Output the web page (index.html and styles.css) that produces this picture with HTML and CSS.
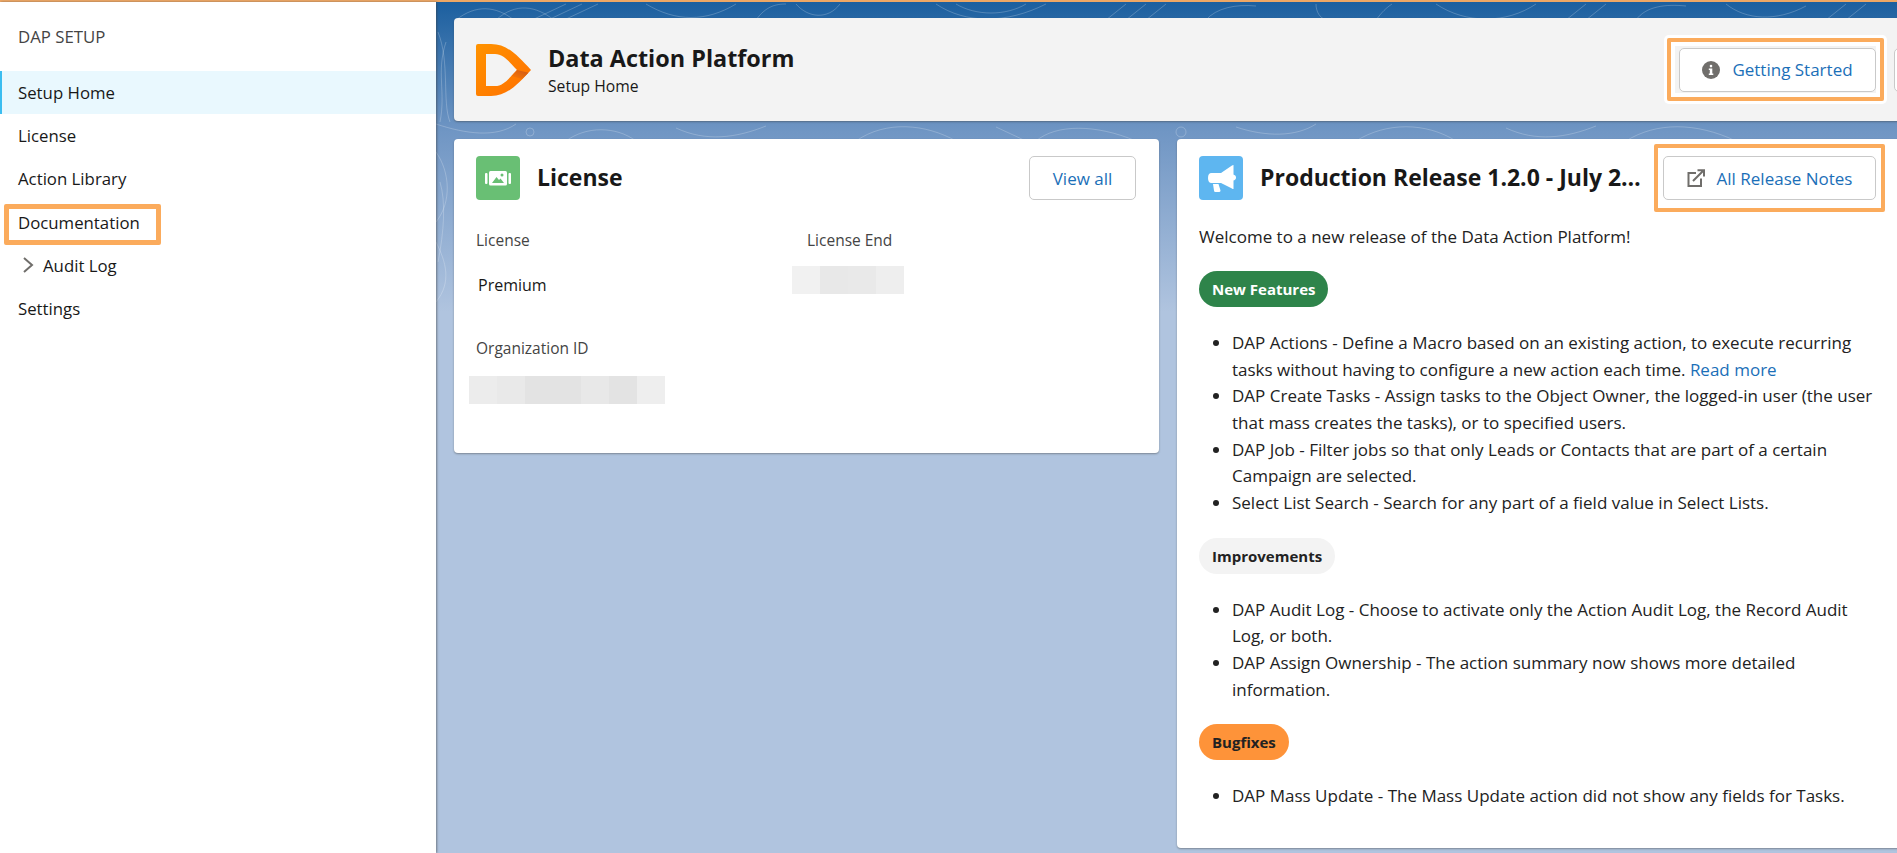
FILE: index.html
```html
<!DOCTYPE html>
<html lang="en">
<head>
    <meta charset="UTF-8">
    <meta name="viewport" content="width=device-width, initial-scale=1.0">
    <title>DAP Setup - Setup Home</title>
    <link rel="stylesheet" href="styles.css">
</head>
<body>
    <div class="top-line"></div>
    <div class="shell">
        <nav class="sidebar">
            <div class="sidebar-title">DAP SETUP</div>
            <a class="nav-item active">Setup Home</a>
            <a class="nav-item">License</a>
            <a class="nav-item">Action Library</a>
            <a class="nav-item">Documentation<span class="mark mark-doc"></span></a>
            <a class="nav-item nav-branch">
                <svg class="chevron" viewBox="0 0 12 18"><path d="M2 2l8 7-8 7" fill="none" stroke="#706e6b" stroke-width="2"/></svg>
                Audit Log
            </a>
            <a class="nav-item">Settings</a>
        </nav>

        <main class="main">
            <svg class="contours" viewBox="0 0 1461 330" preserveAspectRatio="none">
                <g fill="none" stroke="#fff" stroke-opacity="0.22" stroke-width="1">
                    <path d="M20 18C40 2 60 4 78 18M60 18C80 0 100 4 118 18M96 18L130 2M112 18L146 2M128 18L162 2"/>
                    <path d="M210 2C240 20 270 20 300 2M320 18C330 4 340 2 350 2M360 2C372 16 392 18 404 2"/>
                    <path d="M500 2C530 22 570 22 610 2M520 2C540 14 570 14 590 2M670 18L690 2M690 18L710 2M710 18L730 2M770 18C780 6 800 2 820 4"/>
                    <path d="M880 2C880 10 884 16 890 18M940 18C946 10 950 6 956 2M1000 2C1030 22 1070 22 1100 2M1130 18L1150 2M1150 18L1170 2M1200 18C1210 4 1230 2 1250 4"/>
                    <path d="M1290 2C1310 18 1340 20 1370 4M1390 18L1410 2M1410 18L1430 2"/>
                    <path d="M0 122C30 132 60 136 80 122M90 130a4 4 0 1 0 8 0a4 4 0 1 0-8 0M130 139C150 124 180 124 200 139M240 126C270 140 300 136 330 124"/>
                    <path d="M420 139C450 118 490 122 520 139M560 125L590 139M600 139C620 122 660 122 700 139M740 130a5 5 0 1 0 10 0a5 5 0 1 0-10 0"/>
                    <path d="M800 125C830 135 860 135 880 122M920 139C950 120 990 120 1020 139M1070 126C1100 140 1130 136 1160 124M1190 139C1220 120 1260 120 1300 139"/>
                    <path d="M10 40C0 70 10 90 4 120M2 30C14 60 6 100 14 120M0 150C14 170 16 200 0 220M0 240C10 260 16 280 0 300M4 180C10 200 8 230 2 260"/>
                </g>
            </svg>

            <header class="page-header">
                <div class="brand">
                    <svg class="brand-logo" viewBox="0 0 55 52">
                        <defs>
                            <linearGradient id="logo-fill" x1="0" y1="0" x2="1" y2="1">
                                <stop offset="0" stop-color="#ff9300"/>
                                <stop offset="1" stop-color="#ff6f00"/>
                            </linearGradient>
                            <linearGradient id="logo-fold" x1="1" y1="0" x2="0" y2="1">
                                <stop offset="0" stop-color="#c9571c"/>
                                <stop offset="1" stop-color="#ff7a00"/>
                            </linearGradient>
                        </defs>
                        <path fill="url(#logo-fill)" fill-rule="evenodd" d="M2 0H15C31 0 41 11 55 26C41 41 31 52 15 52H2Q0 52 0 50V2Q0 0 2 0ZM10 10V42H19C28 42 33 34 41 26C33 18 28 10 19 10Z"/>
                        <path fill="url(#logo-fold)" d="M41 26L52.500 28.700L46 35L35.500 32Z"/>
                    </svg>
                    <div>
                        <h1 class="brand-title">Data Action Platform</h1>
                        <div class="brand-sub">Setup Home</div>
                    </div>
                </div>
                <button class="btn btn-start">
                    <svg class="btn-icon" viewBox="0 0 18 18">
                        <circle cx="9" cy="9" r="9" fill="#706e6b"/>
                        <rect x="7.700" y="3.800" width="2.600" height="2.600" rx="1.300" fill="#fff"/>
                        <path d="M6.800 7.500h3.500v5h1v1.500H6.800v-1.500h1v-3.500h-1z" fill="#fff"/>
                    </svg>
                    Getting Started
                    <span class="mark mark-start"></span>
                </button>
                <button class="btn btn-next"></button>
            </header>

            <div class="cards">
                <section class="card card-license">
                    <div class="card-head">
                        <span class="card-icon icon-green">
                            <svg viewBox="0 0 44 44">
                                <rect x="9" y="17" width="2.500" height="11" rx="1" fill="#fff"/>
                                <rect x="32.500" y="17" width="2.500" height="11" rx="1" fill="#fff"/>
                                <rect x="13" y="15" width="18" height="14.500" rx="1.500" fill="#fff"/>
                                <path d="M16 27l4.500-6 2.500 3 1.500-1.500 3.500 4.500z" fill="#69bf74"/>
                                <circle cx="26" cy="19" r="1.500" fill="#69bf74"/>
                            </svg>
                        </span>
                        <h2 class="card-title">License</h2>
                        <button class="btn btn-view">View all</button>
                    </div>
                    <div class="fields">
                        <div>
                            <div class="field-label">License</div>
                            <div class="field-value">Premium</div>
                        </div>
                        <div>
                            <div class="field-label">License End</div>
                            <div class="blur blur-end"><i></i><i></i><i></i><i></i></div>
                        </div>
                        <div>
                            <div class="field-label">Organization ID</div>
                            <div class="blur blur-org"><i></i><i></i><i></i><i></i><i></i><i></i><i></i></div>
                        </div>
                    </div>
                </section>

                <section class="card card-release">
                    <div class="card-head">
                        <span class="card-icon icon-blue">
                            <svg viewBox="0 0 44 44">
                                <path d="M12.500 17H22L33 9.500Q33.500 9 34.500 9V33Q33.500 33 33 32.500L22 27H12.500Q9 27 9 22Q9 17 12.500 17Z" fill="#fff"/>
                                <path d="M34 18.500Q37 19 37 21.500Q37 24 34 24.500Z" fill="#fff"/>
                                <path d="M14 28H19.500L21.500 34.500Q21.500 36 20 36H16.500Q15 36 15 34.500Z" fill="#fff"/>
                            </svg>
                        </span>
                        <h2 class="card-title release-title">Production Release 1.2.0 - July 2024</h2>
                        <button class="btn btn-notes">
                            <svg class="btn-icon" viewBox="0 0 18 18">
                                <path d="M9 4H1.500V17H14V9.500" fill="none" stroke="#706e6b" stroke-width="2"/>
                                <path d="M6 12L16 2M10.500 1.200H17V7.500" fill="none" stroke="#706e6b" stroke-width="2"/>
                            </svg>
                            All Release Notes
                            <span class="mark mark-notes"></span>
                        </button>
                    </div>
                    <div class="release-body">
                        <p class="intro">Welcome to a new release of the Data Action Platform!</p>

                        <span class="badge badge-green">New Features</span>
                        <ul class="notes">
                            <li>DAP Actions - Define a Macro based on an existing action, to execute recurring tasks without having to configure a new action each time. <a class="link">Read more</a></li>
                            <li>DAP Create Tasks - Assign tasks to the Object Owner, the logged-in user (the user that mass creates the tasks), or to specified users.</li>
                            <li>DAP Job - Filter jobs so that only Leads or Contacts that are part of a certain Campaign are selected.</li>
                            <li>Select List Search - Search for any part of a field value in Select Lists.</li>
                        </ul>

                        <span class="badge badge-grey">Improvements</span>
                        <ul class="notes">
                            <li>DAP Audit Log - Choose to activate only the Action Audit Log, the Record Audit Log, or both.</li>
                            <li>DAP Assign Ownership - The action summary now shows more detailed information.</li>
                        </ul>

                        <span class="badge badge-orange">Bugfixes</span>
                        <ul class="notes">
                            <li>DAP Mass Update - The Mass Update action did not show any fields for Tasks.</li>
                        </ul>
                    </div>
                </section>
            </div>
        </main>
    </div>
</body>
</html>
```

FILE: styles.css
```css
* {
    box-sizing: border-box;
}

body {
    margin: 0;
    height: 100vh;
    overflow: hidden;
    font-family: "Open Sans", "Noto Sans", sans-serif;
    font-size: 15.5px;
    color: #181818;
    background: #fff;
}

.top-line {
    height: 2px;
    background: #eda765;
}

.shell {
    display: flex;
    height: calc(100vh - 2px);
}

/* Sidebar */
.sidebar {
    flex: 0 0 436px;
    background: #fff;
    position: relative;
    z-index: 2;
    box-shadow: 1px 0 2px rgba(60, 60, 60, 0.55);
}

.sidebar-title {
    height: 69px;
    padding: 22px 0 0 18px;
    line-height: 26px;
    font-size: 16.8px;
    color: #444;
}

.nav-item {
    display: block;
    position: relative;
    height: 43.2px;
    line-height: 43.2px;
    padding-left: 18px;
    font-size: 16.8px;
    color: #181818;
}

.nav-item.active {
    background: #e9f8fe;
    box-shadow: inset 2px 0 0 #3bbdf0;
}

.nav-branch {
    display: flex;
    align-items: center;
    padding-left: 22px;
}

.chevron {
    width: 12px;
    height: 18px;
    margin-right: 9px;
}

/* Orange callouts drawn over the page */
.mark {
    position: absolute;
    border: 4px solid #fbab5c;
    border-radius: 2px;
    pointer-events: none;
}

.mark-doc {
    left: 4px;
    top: 3px;
    width: 157px;
    height: 41px;
    border-width: 5px;
}

.mark-start {
    left: -13px;
    right: -9px;
    top: -11px;
    bottom: -10px;
    box-shadow: 0 0 0 3px #fff, inset 0 0 0 4px #fff;
}

.mark-notes {
    left: -10px;
    right: -10px;
    top: -13px;
    bottom: -13px;
}

/* Main area */
.main {
    flex: 1;
    min-width: 0;
    position: relative;
    overflow: hidden;
    padding: 16px 0 0 18px;
    background: linear-gradient(#1b5f9f 0, #7096c4 130px, #b0c4df 310px);
}

.contours {
    position: absolute;
    left: 0;
    top: 0;
    width: 1461px;
    height: 330px;
}

.page-header {
    position: relative;
    display: flex;
    align-items: center;
    gap: 18px;
    width: 1700px;
    height: 103px;
    padding-left: 22px;
    background: #f3f3f3;
    border-radius: 4px;
    box-shadow: 0 1px 2px rgba(60, 60, 60, 0.45);
}

.brand {
    flex: 0 0 1185px;
    display: flex;
    align-items: center;
    gap: 17px;
}

.brand-logo {
    width: 55px;
    height: 52px;
}

.brand-title {
    margin: 2px 0 0;
    font-size: 23.4px;
    font-weight: 700;
    line-height: 30px;
}

.brand-sub {
    line-height: 26px;
    font-size: 15.7px;
}

.btn {
    position: relative;
    display: flex;
    align-items: center;
    justify-content: center;
    height: 44px;
    padding: 0;
    font: inherit;
    font-size: 17px;
    color: #1b6fb8;
    background: #fff;
    border: 1px solid #c9c9c9;
    border-radius: 5px;
}

.btn-icon {
    width: 18px;
    height: 18px;
    margin-right: 12px;
}

.btn-start {
    flex: 0 0 197px;
}

.btn-next {
    flex: 0 0 120px;
}

.btn-view {
    flex: 0 0 107px;
    margin-left: auto;
}

.btn-notes {
    flex: 0 0 213px;
    margin-left: 13px;
}

/* Cards */
.cards {
    position: relative;
    display: grid;
    grid-template-columns: 705px 740px;
    gap: 18px;
    align-items: start;
    margin-top: 18px;
}

.card {
    background: #fff;
    border-radius: 4px;
    box-shadow: 0 1px 2px rgba(60, 60, 60, 0.45);
}

.card-license {
    padding: 17px 23px 49px 22px;
}

.card-release {
    padding: 17px 41px 38px 22px;
}

.card-head {
    display: flex;
    align-items: center;
}

.card-icon {
    flex: 0 0 44px;
    width: 44px;
    height: 44px;
    border-radius: 4px;
    margin-right: 17px;
}

.card-icon svg {
    display: block;
}

.icon-green {
    background: #69bf74;
}

.icon-blue {
    background: #5eb6f0;
}

.card-title {
    margin: 0 0 2px;
    font-size: 23px;
    font-weight: 700;
    line-height: 30px;
}

.release-title {
    flex: 1;
    min-width: 0;
    overflow: hidden;
    white-space: nowrap;
    text-overflow: ellipsis;
}

/* License fields */
.fields {
    display: grid;
    grid-template-columns: 331px 1fr;
    row-gap: 37px;
    margin-top: 27px;
}

.field-label {
    line-height: 27px;
    color: #444;
}

.field-value {
    margin: 18px 0 0 2px;
    line-height: 26px;
    font-size: 16px;
}

.blur {
    display: flex;
    height: 28px;
    margin-top: 12px;
}

.blur i {
    width: 28px;
}

.blur-end {
    margin-left: -15px;
}

.blur-org {
    margin: 14px 0 0 -7px;
}

.blur-end i:nth-child(1) { background: #f1f1f1; }
.blur-end i:nth-child(2) { background: #e8e8e8; }
.blur-end i:nth-child(3) { background: #e9e9e9; }
.blur-end i:nth-child(4) { background: #eeeeee; }

.blur-org i:nth-child(1) { background: #ececec; }
.blur-org i:nth-child(2) { background: #e9e9e9; }
.blur-org i:nth-child(3) { background: #e3e3e3; }
.blur-org i:nth-child(4) { background: #e3e3e3; }
.blur-org i:nth-child(5) { background: #e8e8e8; }
.blur-org i:nth-child(6) { background: #e3e3e3; }
.blur-org i:nth-child(7) { background: #eeeeee; }

/* Release notes */
.release-body {
    margin-right: -4px;
    font-size: 17px;
    color: #222;
}

.intro {
    margin: 23px 0 21px 0;
    line-height: 27px;
}

.badge {
    display: block;
    width: fit-content;
    height: 36px;
    padding: 0 13px;
    line-height: 36px;
    font-size: 15px;
    font-weight: 700;
    border-radius: 18px;
}

.badge-green {
    background: #2e844a;
    color: #fff;
}

.badge-grey {
    background: #f3f3f3;
}

.badge-orange {
    background: #fe9339;
}

.notes {
    margin: 23px 0 21px;
    padding-left: 33px;
    line-height: 26.67px;
}

.notes:last-child {
    margin-bottom: 0;
}

.link {
    color: #1b6fb8;
}
```
